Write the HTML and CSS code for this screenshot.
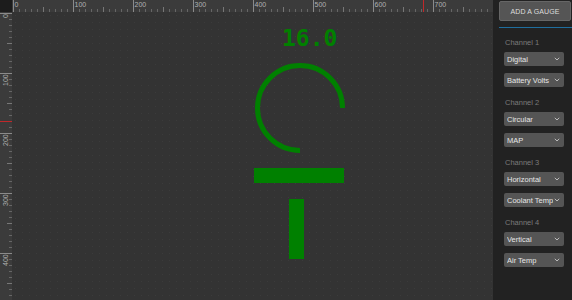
FILE: index.html
```
<!DOCTYPE html>
<html>
<head>
<meta charset="utf-8">
<link rel="stylesheet" href="styles.css">
</head>
<body>
<div class="app">
  <div class="workspace">
    <div class="corner"></div>
    <div class="ruler ruler-top">
      <span class="rl">0</span><span class="rl">100</span><span class="rl">200</span><span class="rl">300</span><span class="rl">400</span><span class="rl">500</span><span class="rl">600</span><span class="rl">700</span>
      <i class="cursor-x"></i>
    </div>
    <div class="ruler ruler-left">
      <span class="rl">0</span><span class="rl">100</span><span class="rl">200</span><span class="rl">300</span><span class="rl">400</span>
      <i class="cursor-y"></i>
    </div>
    <div class="canvas">
      <div class="gauge-digital">16.0</div>
      <svg class="gauge-circular" width="90" height="90" viewBox="0 0 90 90">
        <path d="M45 87.5 A42.5 42.5 0 1 1 87.5 45" fill="none" stroke="#008000" stroke-width="5"/>
      </svg>
      <div class="gauge-horizontal"></div>
      <div class="gauge-vertical"></div>
    </div>
  </div>
  <aside class="panel">
    <button class="add-btn">ADD A GAUGE</button>
    <div class="divider"></div>
    <div class="channels">
      <div class="channel">
        <div class="ch-label">Channel 1</div>
        <div class="select"><span>Digital</span><svg width="6" height="4" viewBox="0 0 6 4"><path d="M0.8 0.8 L3 3 L5.2 0.8" fill="none" stroke="#bbb" stroke-width="1"/></svg></div>
        <div class="select"><span>Battery Volts</span><svg width="6" height="4" viewBox="0 0 6 4"><path d="M0.8 0.8 L3 3 L5.2 0.8" fill="none" stroke="#bbb" stroke-width="1"/></svg></div>
      </div>
      <div class="channel">
        <div class="ch-label">Channel 2</div>
        <div class="select"><span>Circular</span><svg width="6" height="4" viewBox="0 0 6 4"><path d="M0.8 0.8 L3 3 L5.2 0.8" fill="none" stroke="#bbb" stroke-width="1"/></svg></div>
        <div class="select"><span>MAP</span><svg width="6" height="4" viewBox="0 0 6 4"><path d="M0.8 0.8 L3 3 L5.2 0.8" fill="none" stroke="#bbb" stroke-width="1"/></svg></div>
      </div>
      <div class="channel">
        <div class="ch-label">Channel 3</div>
        <div class="select"><span>Horizontal</span><svg width="6" height="4" viewBox="0 0 6 4"><path d="M0.8 0.8 L3 3 L5.2 0.8" fill="none" stroke="#bbb" stroke-width="1"/></svg></div>
        <div class="select"><span>Coolant Temp</span><svg width="6" height="4" viewBox="0 0 6 4"><path d="M0.8 0.8 L3 3 L5.2 0.8" fill="none" stroke="#bbb" stroke-width="1"/></svg></div>
      </div>
      <div class="channel">
        <div class="ch-label">Channel 4</div>
        <div class="select"><span>Vertical</span><svg width="6" height="4" viewBox="0 0 6 4"><path d="M0.8 0.8 L3 3 L5.2 0.8" fill="none" stroke="#bbb" stroke-width="1"/></svg></div>
        <div class="select"><span>Air Temp</span><svg width="6" height="4" viewBox="0 0 6 4"><path d="M0.8 0.8 L3 3 L5.2 0.8" fill="none" stroke="#bbb" stroke-width="1"/></svg></div>
      </div>
    </div>
  </aside>
</div>
</body>
</html>
```
FILE: styles.css
```
* { box-sizing: border-box; }
html, body { margin: 0; padding: 0; }
body {
  width: 572px;
  height: 300px;
  overflow: hidden;
  background: #222;
  font-family: "Liberation Sans", Arial, sans-serif;
}
.app {
  display: flex;
  width: 572px;
  height: 300px;
}
.workspace {
  width: 493px;
  height: 300px;
  display: grid;
  grid-template-columns: 12px 1fr;
  grid-template-rows: 12px 1fr;
  overflow: hidden;
}
.corner { background: #1c1c1c; }
.ruler {
  position: relative;
  background-color: #3b3b3b;
  color: #b0b0b0;
  font-size: 7px;
  line-height: 7px;
  overflow: hidden;
}
.ruler-top {
  display: flex;
  padding-left: 1px;
  background-image:
    linear-gradient(to right, #8a8a8a 1px, transparent 1px),
    linear-gradient(to right, #777 1px, transparent 1px),
    linear-gradient(to right, #666 1px, transparent 1px);
  background-size: 60px 100%, 30px 5px, 6px 3px;
  background-position: 1px 0, 1px 100%, 1px 100%;
  background-repeat: repeat-x;
}
.ruler-top .rl {
  flex: 0 0 60px;
  padding-left: 1.5px;
  padding-top: 0.5px;
}
.ruler-left {
  display: flex;
  flex-direction: column;
  padding-top: 1px;
  background-image:
    linear-gradient(to bottom, #8a8a8a 1px, transparent 1px),
    linear-gradient(to bottom, #777 1px, transparent 1px),
    linear-gradient(to bottom, #666 1px, transparent 1px);
  background-size: 100% 60px, 5px 30px, 3px 6px;
  background-position: 0 1px, 100% 1px, 100% 1px;
  background-repeat: repeat-y;
}
.ruler-left .rl {
  flex: 0 0 60px;
  writing-mode: vertical-rl;
  transform: rotate(180deg);
  text-align: end;
  padding-bottom: 1.5px;
  padding-right: 2px;
  width: 10px;
}
.cursor-x {
  position: absolute;
  left: 411px;
  top: 0;
  width: 1px;
  height: 12px;
  background: #c0282a;
}
.cursor-y {
  position: absolute;
  left: 0;
  top: 109px;
  width: 12px;
  height: 1px;
  background: #c0282a;
}
.canvas {
  position: relative;
  background-color: #333;
  background-image: radial-gradient(circle, #3b3b3b 0.6px, transparent 0.9px);
  background-size: 7px 7px;
}
.gauge-digital {
  position: absolute;
  left: 270px;
  top: 15px;
  font-family: "DejaVu Sans Mono", monospace;
  font-weight: bold;
  font-size: 23px;
  line-height: 22px;
  color: #008000;
  white-space: nowrap;
}
.gauge-circular {
  position: absolute;
  left: 243px;
  top: 51px;
  display: block;
}
.gauge-horizontal {
  position: absolute;
  left: 242px;
  top: 156px;
  width: 90px;
  height: 15px;
  background: #008000;
}
.gauge-vertical {
  position: absolute;
  left: 277px;
  top: 187px;
  width: 15px;
  height: 60px;
  background: #008000;
}
.panel {
  width: 79px;
  height: 300px;
  background: #222;
  padding: 1px 0 0 6px;
  display: flex;
  flex-direction: column;
}
.add-btn {
  width: 72px;
  height: 20px;
  margin: 0;
  padding: 0;
  background: #555;
  border: 1px solid #666;
  border-radius: 2px;
  color: #ddd;
  font-family: "Liberation Sans", Arial, sans-serif;
  font-size: 7px;
  letter-spacing: 0.1px;
}
.divider {
  margin-top: 6px;
  height: 1px;
  background: #1f6e9e;
  width: 73px;
}
.channels {
  display: flex;
  flex-direction: column;
  gap: 11px;
  padding: 10px 0 0 5px;
}
.channel {
  display: flex;
  flex-direction: column;
}
.ch-label {
  height: 10px;
  line-height: 10px;
  font-size: 7.5px;
  color: #7a7a7a;
  margin-bottom: 4px;
  padding-left: 1px;
}
.select {
  width: 60px;
  height: 14px;
  background: #555;
  border-radius: 2px;
  display: flex;
  align-items: center;
  justify-content: space-between;
  padding: 0 4px 0 3px;
  color: #e6e6e6;
  font-size: 7.5px;
  white-space: nowrap;
  overflow: hidden;
}
.select + .select { margin-top: 7px; }
.select span {
  overflow: hidden;
  flex: 1 1 auto;
  min-width: 0;
}
.select svg { flex: 0 0 auto; margin-left: 1px; }
```
